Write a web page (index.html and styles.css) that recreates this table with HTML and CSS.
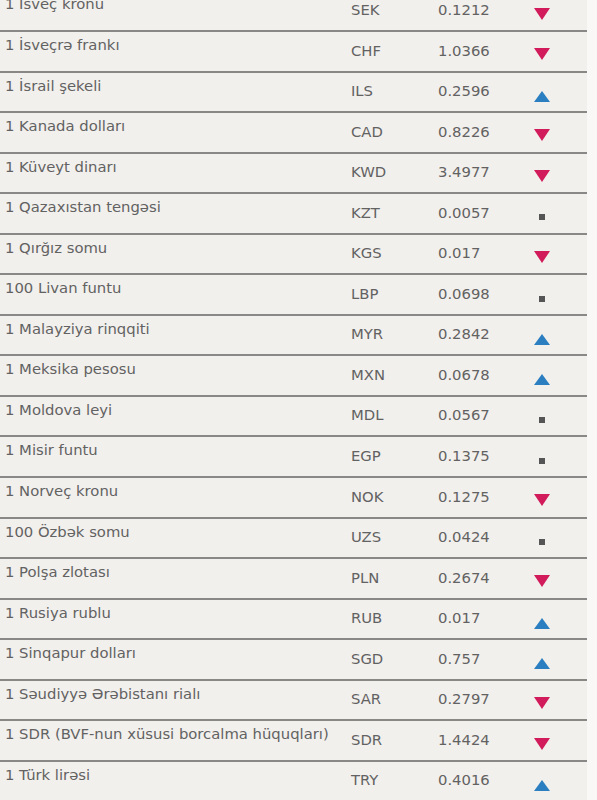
FILE: index.html
```html
<!DOCTYPE html>
<html lang="az">
<head>
<meta charset="utf-8">
<title>Valyuta məzənnələri</title>
<link rel="stylesheet" href="styles.css">
</head>
<body>
<div class="rates">
  <div class="row"><span class="name">1 İsveç kronu</span><span class="code">SEK</span><span class="val">0.1212</span><span class="trend"><i class="down"></i></span></div>
  <div class="row"><span class="name">1 İsveçrə frankı</span><span class="code">CHF</span><span class="val">1.0366</span><span class="trend"><i class="down"></i></span></div>
  <div class="row"><span class="name">1 İsrail şekeli</span><span class="code">ILS</span><span class="val">0.2596</span><span class="trend"><i class="up"></i></span></div>
  <div class="row"><span class="name">1 Kanada dolları</span><span class="code">CAD</span><span class="val">0.8226</span><span class="trend"><i class="down"></i></span></div>
  <div class="row"><span class="name">1 Küveyt dinarı</span><span class="code">KWD</span><span class="val">3.4977</span><span class="trend"><i class="down"></i></span></div>
  <div class="row"><span class="name">1 Qazaxıstan tengəsi</span><span class="code">KZT</span><span class="val">0.0057</span><span class="trend"><i class="same"></i></span></div>
  <div class="row"><span class="name">1 Qırğız somu</span><span class="code">KGS</span><span class="val">0.017</span><span class="trend"><i class="down"></i></span></div>
  <div class="row"><span class="name">100 Livan funtu</span><span class="code">LBP</span><span class="val">0.0698</span><span class="trend"><i class="same"></i></span></div>
  <div class="row"><span class="name">1 Malayziya rinqqiti</span><span class="code">MYR</span><span class="val">0.2842</span><span class="trend"><i class="up"></i></span></div>
  <div class="row"><span class="name">1 Meksika pesosu</span><span class="code">MXN</span><span class="val">0.0678</span><span class="trend"><i class="up"></i></span></div>
  <div class="row"><span class="name">1 Moldova leyi</span><span class="code">MDL</span><span class="val">0.0567</span><span class="trend"><i class="same"></i></span></div>
  <div class="row"><span class="name">1 Misir funtu</span><span class="code">EGP</span><span class="val">0.1375</span><span class="trend"><i class="same"></i></span></div>
  <div class="row"><span class="name">1 Norveç kronu</span><span class="code">NOK</span><span class="val">0.1275</span><span class="trend"><i class="down"></i></span></div>
  <div class="row"><span class="name">100 Özbək somu</span><span class="code">UZS</span><span class="val">0.0424</span><span class="trend"><i class="same"></i></span></div>
  <div class="row"><span class="name">1 Polşa zlotası</span><span class="code">PLN</span><span class="val">0.2674</span><span class="trend"><i class="down"></i></span></div>
  <div class="row"><span class="name">1 Rusiya rublu</span><span class="code">RUB</span><span class="val">0.017</span><span class="trend"><i class="up"></i></span></div>
  <div class="row"><span class="name">1 Sinqapur dolları</span><span class="code">SGD</span><span class="val">0.757</span><span class="trend"><i class="up"></i></span></div>
  <div class="row"><span class="name">1 Səudiyyə Ərəbistanı rialı</span><span class="code">SAR</span><span class="val">0.2797</span><span class="trend"><i class="down"></i></span></div>
  <div class="row"><span class="name">1 SDR (BVF-nun xüsusi borcalma hüquqları)</span><span class="code">SDR</span><span class="val">1.4424</span><span class="trend"><i class="down"></i></span></div>
  <div class="row"><span class="name">1 Türk lirəsi</span><span class="code">TRY</span><span class="val">0.4016</span><span class="trend"><i class="up"></i></span></div>
</div>
</body>
</html>
```
FILE: styles.css
```css
html, body {
  margin: 0;
  padding: 0;
  background: #f9f8f6;
}
body {
  font-family: "DejaVu Sans", Verdana, sans-serif;
  font-size: 14.8px;
  line-height: 17px;
  color: #626262;
  overflow: hidden;
}
.rates {
  width: 587px;
  margin-top: -8.56px;
  background: #f2f0ed;
}
.row {
  display: grid;
  grid-template-columns: 351px 87px 96px 53px;
  box-sizing: border-box;
  height: 40.56px;
  border-bottom: 2px solid #8a8886;
}
.name {
  padding: 4px 0 0 5px;
  white-space: nowrap;
}
.code, .val {
  padding-top: 9.5px;
}
.trend i {
  display: block;
}
.down {
  width: 0;
  height: 0;
  margin-top: 16.3px;
  border-left: 8px solid transparent;
  border-right: 8px solid transparent;
  border-top: 12px solid #d11b5b;
}
.up {
  width: 0;
  height: 0;
  margin-top: 18px;
  border-left: 8px solid transparent;
  border-right: 8px solid transparent;
  border-bottom: 11px solid #2b7fc0;
}
.same {
  width: 6px;
  height: 6px;
  margin: 20.3px 0 0 5px;
  background: #555;
}
```
